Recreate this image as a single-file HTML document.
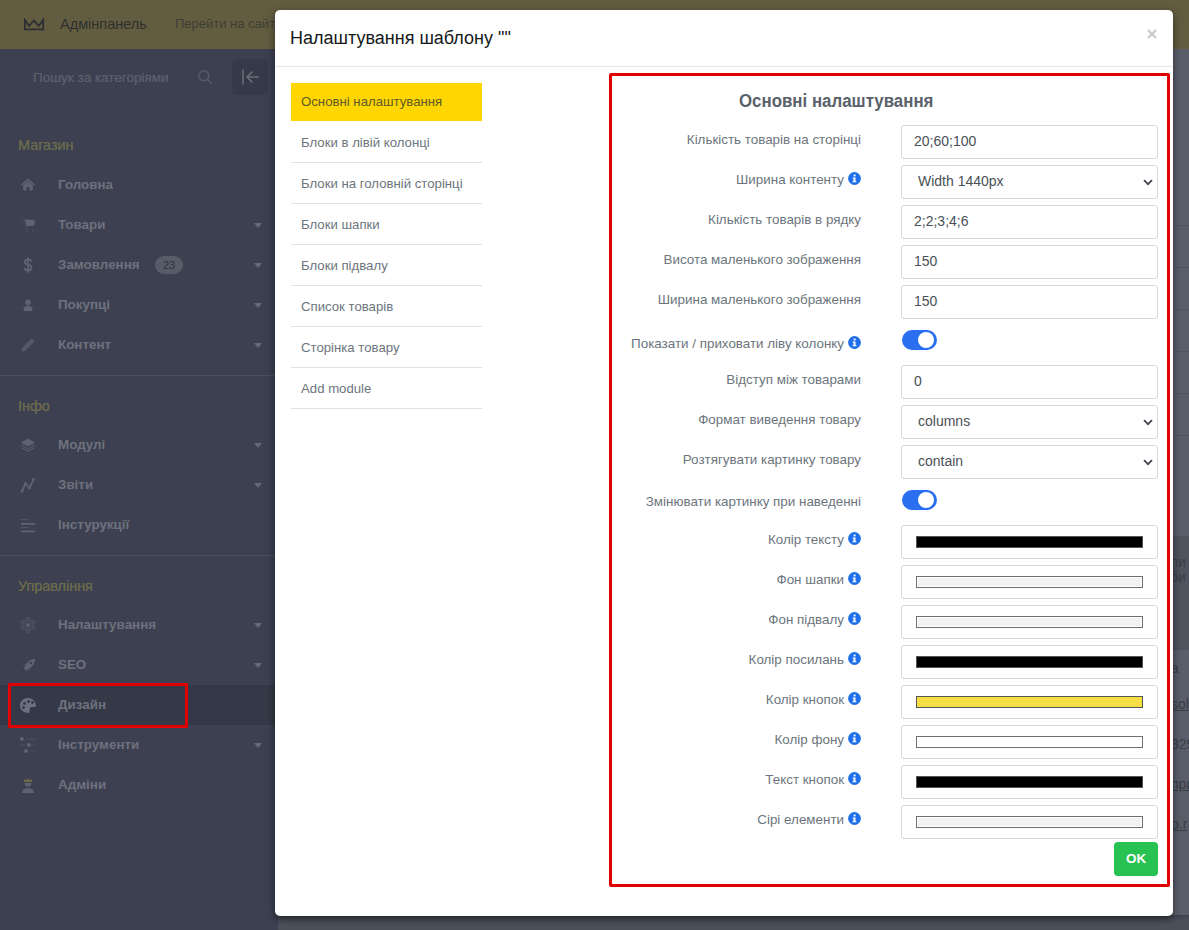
<!DOCTYPE html>
<html><head><meta charset="utf-8">
<style>
*{box-sizing:border-box;margin:0;padding:0}
html,body{width:1189px;height:930px;overflow:hidden;font-family:"Liberation Sans",sans-serif;background:#4f5360}
.abs{position:absolute}
#hdr{position:absolute;z-index:2;left:0;top:0;width:1189px;height:49px;background:#625d40}
#side{position:absolute;left:0;top:0;width:278px;height:930px;background:#3c4050}
#main{position:absolute;left:278px;top:49px;width:911px;height:881px;background:#5a5e6a;overflow:hidden}
.sitem{position:absolute;left:0;width:278px;height:40px}
.sitem .t{position:absolute;left:58px;top:0;line-height:40px;font-weight:bold;font-size:13.4px;color:#6e717d}
.sitem .ar{position:absolute;left:254px;top:18px;width:0;height:0;border-left:4.5px solid transparent;border-right:4.5px solid transparent;border-top:5px solid #676a76}
.sitem svg{position:absolute;left:19px;top:11px}
.shead{position:absolute;left:18px;font-size:14.4px;color:#6b6a4c;text-shadow:0 0 0.4px #6b6a4c}
.sdiv{position:absolute;left:0;width:278px;height:1px;background:#4a4e5d}

#modal{position:absolute;z-index:5;left:275px;top:10px;width:898px;height:906px;background:#fff;border-radius:5px;box-shadow:0 3px 9px rgba(0,0,0,.5)}
#mtitle{position:absolute;left:15px;top:17px;font-size:18px;color:#161819;line-height:22px}
#mclose{position:absolute;left:871px;top:18px}
#mline{position:absolute;left:0;top:56px;width:898px;height:1px;background:#e5e7ea}
.nav{position:absolute;left:16px;width:191px;height:41px;border-bottom:1px solid #dee2e6;font-size:13.2px;color:#6c757d;padding-left:10px;line-height:42px}
.nav.act{background:#ffd600;border-bottom:0;color:#5d5a2a;height:38px;line-height:38px}

#panel{position:absolute;left:334px;top:63px;width:561px;height:814px;border:3px solid #e10000;border-radius:2px}
#ptitle{position:absolute;left:464px;top:81px;font-size:18px;font-weight:bold;color:#59616b;transform:scaleX(0.937);transform-origin:0 0;white-space:nowrap}
.lbl{position:absolute;right:312px;font-size:13.4px;color:#6c757d;white-space:nowrap;line-height:16px}
.inp{position:absolute;left:626px;width:257px;height:34px;border:1px solid #d6d9dc;border-radius:3px;font-size:14px;color:#495057;padding-left:12px;line-height:30px}
.sel{padding-left:16px}
.sel svg{position:absolute;right:4px;top:13px}
.sw{position:absolute;left:14px;top:10px;width:227px;height:12px;border:1px solid #555}
.sw.lt{border-color:#707070;box-shadow:inset 0 0 0 1px #fff}
.info{display:inline-block;width:13px;height:13px;vertical-align:-1px;margin-left:4px}
.tog{position:absolute;left:627px;width:35px;height:20px;border-radius:10px;background:#2a6ff0}
.tog:after{content:"";position:absolute;right:3px;top:2px;width:16px;height:16px;border-radius:50%;background:#fff}
#ok{position:absolute;left:839px;top:832px;width:44px;height:34px;background:#28c252;border-radius:4px;color:#fff;font-weight:bold;font-size:13.5px;text-align:center;line-height:34px}
</style></head><body>
<div id="hdr">
  <svg class="abs" style="left:23px;top:18px" width="23" height="15" viewBox="0 0 23 15"><path d="M1.8 1.8 L6 7.8 L11 2.6 L15.8 7.8 L20.2 1.8 V11.3 H1.8 Z" fill="none" stroke="#2c2e33" stroke-width="1.7" stroke-linejoin="miter"/></svg>
  <div class="abs" style="left:60px;top:16px;font-size:14.5px;color:#2f302e">Адмінпанель</div>
  <div class="abs" style="left:175px;top:16px;font-size:13px;color:#3f3e33">Перейти на сайт</div>
</div>
<div id="side">
<div class="abs" style="left:33px;top:70px;font-size:13.5px;color:#5a5e6c;text-shadow:0 0 0.5px #5a5e6c">Пошук за категоріями</div>
<svg class="abs" style="left:197px;top:69px" width="16" height="16" viewBox="0 0 16 16"><circle cx="6.8" cy="6.8" r="5" fill="none" stroke="#565a69" stroke-width="1.4"/><path d="M10.5 10.5 L14.5 14.5" stroke="#565a69" stroke-width="1.6"/></svg>
<div class="abs" style="left:232px;top:59px;width:36px;height:36px;border-radius:5px;background:#363a48"></div>
<svg class="abs" style="left:240px;top:68px" width="20" height="18" viewBox="0 0 20 18"><path d="M3 1.5 V16.5" stroke="#6a6d79" stroke-width="1.6"/><path d="M7 9 H19 M12.5 3.5 L7 9 L12.5 14.5" stroke="#6a6d79" stroke-width="1.6" fill="none"/></svg>
<div class="shead" style="top:137px">Магазин</div>
<div class="sdiv" style="top:375px"></div>
<div class="shead" style="top:398px">Інфо</div>
<div class="sdiv" style="top:555px"></div>
<div class="shead" style="top:578px">Управління</div>
<div class="abs" style="left:0;top:685px;width:278px;height:40px;background:#353947"></div>
<div class="sitem" style="top:165px"><svg width="18" height="18" viewBox="-1 -1 18 18"><path d="M8 1.5 L1 7.5 L2.2 8.6 L8 3.8 L13.8 8.6 L15 7.5 Z" fill="#5f6270"/><path d="M3.2 8.2 L8 4.4 L12.8 8.2 V13.5 H9.6 V10 H6.4 V13.5 H3.2 Z" fill="#5f6270"/></svg><div class="t">Головна</div></div>
<div class="sitem" style="top:205px"><svg width="18" height="18" viewBox="-1 -1 18 18"><path d="M5 2.5 L15 3 L14 8.5 L6.5 9.5 Z" fill="#5f6270"/><path d="M1 1.5 L4.5 2.3 L6.8 13" stroke="#5f6270" stroke-width="1" fill="none" opacity=".35"/><circle cx="7" cy="14" r="1" fill="#5f6270" opacity=".35"/><circle cx="13" cy="14" r="1" fill="#5f6270" opacity=".35"/></svg><div class="t">Товари</div><div class="ar"></div></div>
<div class="sitem" style="top:245px"><svg width="18" height="18" viewBox="-1 -1 18 18"><path d="M11.3 4.6 C11 3.2 9.8 2.6 8 2.6 C6.1 2.6 4.9 3.6 4.9 5.1 C4.9 6.8 6.5 7.3 8 7.7 C9.8 8.1 11.4 8.7 11.4 10.7 C11.4 12.4 10 13.4 8 13.4 C6 13.4 4.9 12.5 4.6 11" stroke="#5f6270" stroke-width="2" fill="none"/><path d="M8 0.6 V15.8" stroke="#5f6270" stroke-width="1.8"/></svg><div class="t">Замовлення</div><div class="ar"></div><div class="abs" style="left:155px;top:11px;width:28px;height:18px;border-radius:9px;background:#585c69;color:#2f3340;font-size:11px;text-align:center;line-height:18px">23</div></div>
<div class="sitem" style="top:285px"><svg width="18" height="18" viewBox="-1 -1 18 18"><circle cx="8" cy="5.2" r="2.8" fill="#5f6270"/><path d="M3.5 14 C3.5 10 5.5 8.8 8 8.8 C10.5 8.8 12.5 10 12.5 14 Z" fill="#5f6270"/><path d="M1.5 12 C1.5 10 2.2 9 3.5 8.5 M14.5 12 C14.5 10 13.8 9 12.5 8.5" stroke="#5f6270" stroke-width="1" fill="none" opacity=".5"/></svg><div class="t">Покупці</div><div class="ar"></div></div>
<div class="sitem" style="top:325px"><svg width="18" height="18" viewBox="-1 -1 18 18"><path d="M11.5 1.5 L14.5 4.5 L5 14 L1.5 14.5 L2 11 Z" fill="#5f6270" opacity=".75"/></svg><div class="t">Контент</div><div class="ar"></div></div>
<div class="sitem" style="top:425px"><svg width="18" height="18" viewBox="-1 -1 18 18"><path d="M8 1.5 L15 5.5 L8 9.5 L1 5.5 Z" fill="#5f6270"/><path d="M1.5 8 L8 11.8 L14.5 8 M1.5 10.5 L8 14.3 L14.5 10.5" stroke="#5f6270" stroke-width="1.3" fill="none" opacity=".7"/></svg><div class="t">Модулі</div><div class="ar"></div></div>
<div class="sitem" style="top:465px"><svg width="18" height="18" viewBox="-1 -1 18 18"><path d="M2 14 L5.5 6.5 L9.5 11 L13.5 2.5" stroke="#5f6270" stroke-width="1.8" fill="none"/><circle cx="2" cy="14" r="1.5" fill="#5f6270"/><circle cx="5.5" cy="6.5" r="1.5" fill="#5f6270"/><circle cx="9.5" cy="11" r="1.5" fill="#5f6270"/><circle cx="13.5" cy="2.5" r="1.5" fill="#5f6270"/></svg><div class="t">Звіти</div><div class="ar"></div></div>
<div class="sitem" style="top:505px"><svg width="18" height="18" viewBox="-1 -1 18 18"><rect x="1" y="2" width="8" height="1.2" fill="#5f6270" opacity=".6"/><rect x="1" y="6" width="14" height="1.8" fill="#5f6270"/><rect x="1" y="10" width="8" height="1.2" fill="#5f6270" opacity=".6"/><rect x="1" y="13.5" width="14" height="1.8" fill="#5f6270"/></svg><div class="t">Інстурукції</div></div>
<div class="sitem" style="top:605px"><svg width="18" height="18" viewBox="-1 -1 18 18"><g fill="#5f6270" opacity=".32"><circle cx="8" cy="8" r="6.3"/><circle cx="8.00" cy="14.20" r="2.4"/><circle cx="2.63" cy="11.10" r="2.4"/><circle cx="2.63" cy="4.90" r="2.4"/><circle cx="8.00" cy="1.80" r="2.4"/><circle cx="13.37" cy="4.90" r="2.4"/><circle cx="13.37" cy="11.10" r="2.4"/></g><circle cx="8" cy="8" r="3.3" fill="#3c4050" opacity=".7"/><circle cx="8" cy="8" r="2.1" fill="#5f6270"/></svg><div class="t">Налаштування</div><div class="ar"></div></div>
<div class="sitem" style="top:645px"><svg width="18" height="18" viewBox="-1 -1 18 18"><path d="M15.2 1.8 C10 2.2 5.5 6 3.9 11.5 L5.8 13.5 C11 12 14.8 7.5 15.2 1.8 Z" fill="#5f6270"/><circle cx="10.8" cy="6" r="1.3" fill="#3c4050"/><path d="M1 9.5 L4.2 6.8 L6 8.2 Z M6.8 15.5 L9.2 12 L10.2 13.6 Z" fill="#5f6270" opacity=".35"/></svg><div class="t">SEO</div><div class="ar"></div></div>
<div class="sitem" style="top:685px"><svg width="18" height="18" viewBox="-1 -1 18 18"><path d="M8 1 C3.5 1 0 4.2 0 8.5 C0 12.8 3.5 16 9 16 L10 11 C10.5 10.3 11.5 10 12.5 10 L16 9.8 C16.2 4.8 12.5 1 8 1 Z" fill="#6c707f"/><circle cx="4.5" cy="6.5" r="1.4" fill="#353947"/><circle cx="8.5" cy="4.5" r="1.4" fill="#353947"/><circle cx="12.5" cy="5.5" r="1.4" fill="#353947"/><circle cx="3.5" cy="10.5" r="1.4" fill="#353947"/></svg><div class="t">Дизайн</div></div>
<div class="sitem" style="top:725px"><svg width="18" height="18" viewBox="-1 -1 18 18"><path d="M6 2 H16 M0 8 H5 M12.5 8 H16 M0 14 H1.5 M10 14 H16" stroke="#5f6270" stroke-width="1.2" opacity=".45"/><circle cx="1.8" cy="2" r="2" fill="#5f6270"/><circle cx="8.9" cy="8" r="2" fill="#5f6270"/><circle cx="6" cy="14" r="2" fill="#5f6270"/></svg><div class="t">Інструменти</div><div class="ar"></div></div>
<div class="sitem" style="top:765px"><svg width="18" height="18" viewBox="-1 -1 18 18"><path d="M4 2 L5.5 3 L8 1.8 L10.5 3 L12 2 V5 H4 Z" fill="#6b6947"/><path d="M4.5 6 H11.5 C11.5 8.5 10.2 9.5 8 9.5 C5.8 9.5 4.5 8.5 4.5 6 Z" fill="#5f6270"/><path d="M2 16 C2 12.8 4.5 11.3 8 11.3 C11.5 11.3 14 12.8 14 16 Z" fill="#5f6270"/></svg><div class="t">Адміни</div></div>
<div class="abs" style="left:8px;top:683px;width:180px;height:45px;border:3px solid #e00000;border-radius:1px"></div>
</div>
<div id="main">
  <div class="abs" style="left:0;top:487px;width:911px;height:114px;background:#50545f"></div>
  <div class="abs" style="left:895px;top:176px;width:16px;height:1px;background:#50545f"></div>
  <div class="abs" style="left:895px;top:218px;width:16px;height:1px;background:#50545f"></div>
  <div class="abs" style="left:895px;top:260px;width:16px;height:1px;background:#50545f"></div>
  <div class="abs" style="left:895px;top:302px;width:16px;height:1px;background:#50545f"></div>
  <div class="abs" style="left:895px;top:344px;width:16px;height:1px;background:#50545f"></div>
  <div class="abs" style="left:895px;top:386px;width:16px;height:1px;background:#50545f"></div>
  <div class="abs" style="left:892px;top:506px;font-size:14px;line-height:15px;color:#3a3e49">ли<br>би</div>
  <div class="abs" style="left:893px;top:611px;font-size:14px;color:#3a3e49">а</div>
  <div class="abs" style="left:893px;top:647px;font-size:14px;color:#3a3e49;text-decoration:underline">sol</div>
  <div class="abs" style="left:893px;top:687px;font-size:14px;color:#3a3e49">329</div>
  <div class="abs" style="left:893px;top:727px;font-size:14px;color:#3a3e49;text-decoration:underline">при</div>
  <div class="abs" style="left:893px;top:767px;font-size:14px;color:#3a3e49;text-decoration:underline">o.r</div>
  <div class="abs" style="left:0;top:866px;width:911px;height:15px;background:linear-gradient(#3f434d,#4c505b 6px)"></div>
</div>
<div id="modal">
  <div id="mtitle">Налаштування шаблону ""</div>
  <svg id="mclose" width="12" height="12" viewBox="0 0 12 12"><path d="M2 2 L10 10 M10 2 L2 10" stroke="#c6c6c6" stroke-width="2"/></svg>
  <div id="mline"></div>
  <div class="nav act" style="top:73px">Основні налаштування</div>
  <div class="nav" style="top:112px">Блоки в лівій колонці</div>
  <div class="nav" style="top:153px">Блоки на головній сторінці</div>
  <div class="nav" style="top:194px">Блоки шапки</div>
  <div class="nav" style="top:235px">Блоки підвалу</div>
  <div class="nav" style="top:276px">Список товарів</div>
  <div class="nav" style="top:317px">Сторінка товару</div>
  <div class="nav" style="top:358px">Add module</div>
  <div id="panel"></div>
  <div id="ptitle">Основні налаштування</div>
  <div id="rows">
  <div class="lbl" style="top:122px">Кількість товарів на сторінці</div>
  <div class="inp" style="top:115px">20;60;100</div>
  <div class="lbl" style="top:162px">Ширина контенту<svg class="info" width="13" height="13" viewBox="0 0 13 13"><circle cx="6.5" cy="6.5" r="6.4" fill="#1f6feb"/><rect x="5.6" y="2.6" width="2" height="1.8" fill="#fff"/><path d="M4.6 5.4 H7.5 V9.2 H8.4 V10.3 H4.5 V9.2 H5.5 V6.4 H4.6 Z" fill="#fff"/></svg></div>
  <div class="inp sel" style="top:155px">Width 1440px<svg width="10" height="7" viewBox="0 0 10 7"><path d="M1 1.2 L5 5.2 L9 1.2" fill="none" stroke="#474b50" stroke-width="1.9"/></svg></div>
  <div class="lbl" style="top:202px">Кількість товарів в рядку</div>
  <div class="inp" style="top:195px">2;2;3;4;6</div>
  <div class="lbl" style="top:242px">Висота маленького зображення</div>
  <div class="inp" style="top:235px">150</div>
  <div class="lbl" style="top:282px">Ширина маленького зображення</div>
  <div class="inp" style="top:275px">150</div>
  <div class="lbl" style="top:326px">Показати / приховати ліву колонку<svg class="info" width="13" height="13" viewBox="0 0 13 13"><circle cx="6.5" cy="6.5" r="6.4" fill="#1f6feb"/><rect x="5.6" y="2.6" width="2" height="1.8" fill="#fff"/><path d="M4.6 5.4 H7.5 V9.2 H8.4 V10.3 H4.5 V9.2 H5.5 V6.4 H4.6 Z" fill="#fff"/></svg></div>
  <div class="tog" style="top:320px"></div>
  <div class="lbl" style="top:362px">Відступ між товарами</div>
  <div class="inp" style="top:355px">0</div>
  <div class="lbl" style="top:402px">Формат виведення товару</div>
  <div class="inp sel" style="top:395px">columns<svg width="10" height="7" viewBox="0 0 10 7"><path d="M1 1.2 L5 5.2 L9 1.2" fill="none" stroke="#474b50" stroke-width="1.9"/></svg></div>
  <div class="lbl" style="top:442px">Розтягувати картинку товару</div>
  <div class="inp sel" style="top:435px">contain<svg width="10" height="7" viewBox="0 0 10 7"><path d="M1 1.2 L5 5.2 L9 1.2" fill="none" stroke="#474b50" stroke-width="1.9"/></svg></div>
  <div class="lbl" style="top:484px">Змінювати картинку при наведенні</div>
  <div class="tog" style="top:480px"></div>
  <div class="lbl" style="top:522px">Колір тексту<svg class="info" width="13" height="13" viewBox="0 0 13 13"><circle cx="6.5" cy="6.5" r="6.4" fill="#1f6feb"/><rect x="5.6" y="2.6" width="2" height="1.8" fill="#fff"/><path d="M4.6 5.4 H7.5 V9.2 H8.4 V10.3 H4.5 V9.2 H5.5 V6.4 H4.6 Z" fill="#fff"/></svg></div>
  <div class="inp" style="top:515px"><div class="sw" style="background:#000"></div></div>
  <div class="lbl" style="top:562px">Фон шапки<svg class="info" width="13" height="13" viewBox="0 0 13 13"><circle cx="6.5" cy="6.5" r="6.4" fill="#1f6feb"/><rect x="5.6" y="2.6" width="2" height="1.8" fill="#fff"/><path d="M4.6 5.4 H7.5 V9.2 H8.4 V10.3 H4.5 V9.2 H5.5 V6.4 H4.6 Z" fill="#fff"/></svg></div>
  <div class="inp" style="top:555px"><div class="sw lt" style="background:#f2f2f2"></div></div>
  <div class="lbl" style="top:602px">Фон підвалу<svg class="info" width="13" height="13" viewBox="0 0 13 13"><circle cx="6.5" cy="6.5" r="6.4" fill="#1f6feb"/><rect x="5.6" y="2.6" width="2" height="1.8" fill="#fff"/><path d="M4.6 5.4 H7.5 V9.2 H8.4 V10.3 H4.5 V9.2 H5.5 V6.4 H4.6 Z" fill="#fff"/></svg></div>
  <div class="inp" style="top:595px"><div class="sw lt" style="background:#f2f2f2"></div></div>
  <div class="lbl" style="top:642px">Колір посилань<svg class="info" width="13" height="13" viewBox="0 0 13 13"><circle cx="6.5" cy="6.5" r="6.4" fill="#1f6feb"/><rect x="5.6" y="2.6" width="2" height="1.8" fill="#fff"/><path d="M4.6 5.4 H7.5 V9.2 H8.4 V10.3 H4.5 V9.2 H5.5 V6.4 H4.6 Z" fill="#fff"/></svg></div>
  <div class="inp" style="top:635px"><div class="sw" style="background:#000"></div></div>
  <div class="lbl" style="top:682px">Колір кнопок<svg class="info" width="13" height="13" viewBox="0 0 13 13"><circle cx="6.5" cy="6.5" r="6.4" fill="#1f6feb"/><rect x="5.6" y="2.6" width="2" height="1.8" fill="#fff"/><path d="M4.6 5.4 H7.5 V9.2 H8.4 V10.3 H4.5 V9.2 H5.5 V6.4 H4.6 Z" fill="#fff"/></svg></div>
  <div class="inp" style="top:675px"><div class="sw" style="background:#f6df45"></div></div>
  <div class="lbl" style="top:722px">Колір фону<svg class="info" width="13" height="13" viewBox="0 0 13 13"><circle cx="6.5" cy="6.5" r="6.4" fill="#1f6feb"/><rect x="5.6" y="2.6" width="2" height="1.8" fill="#fff"/><path d="M4.6 5.4 H7.5 V9.2 H8.4 V10.3 H4.5 V9.2 H5.5 V6.4 H4.6 Z" fill="#fff"/></svg></div>
  <div class="inp" style="top:715px"><div class="sw lt" style="background:#fff"></div></div>
  <div class="lbl" style="top:762px">Текст кнопок<svg class="info" width="13" height="13" viewBox="0 0 13 13"><circle cx="6.5" cy="6.5" r="6.4" fill="#1f6feb"/><rect x="5.6" y="2.6" width="2" height="1.8" fill="#fff"/><path d="M4.6 5.4 H7.5 V9.2 H8.4 V10.3 H4.5 V9.2 H5.5 V6.4 H4.6 Z" fill="#fff"/></svg></div>
  <div class="inp" style="top:755px"><div class="sw" style="background:#000"></div></div>
  <div class="lbl" style="top:802px">Сірі елементи<svg class="info" width="13" height="13" viewBox="0 0 13 13"><circle cx="6.5" cy="6.5" r="6.4" fill="#1f6feb"/><rect x="5.6" y="2.6" width="2" height="1.8" fill="#fff"/><path d="M4.6 5.4 H7.5 V9.2 H8.4 V10.3 H4.5 V9.2 H5.5 V6.4 H4.6 Z" fill="#fff"/></svg></div>
  <div class="inp" style="top:795px"><div class="sw lt" style="background:#f2f2f2"></div></div>
  </div>
  <div id="ok">OK</div>
</div>
</body></html>
